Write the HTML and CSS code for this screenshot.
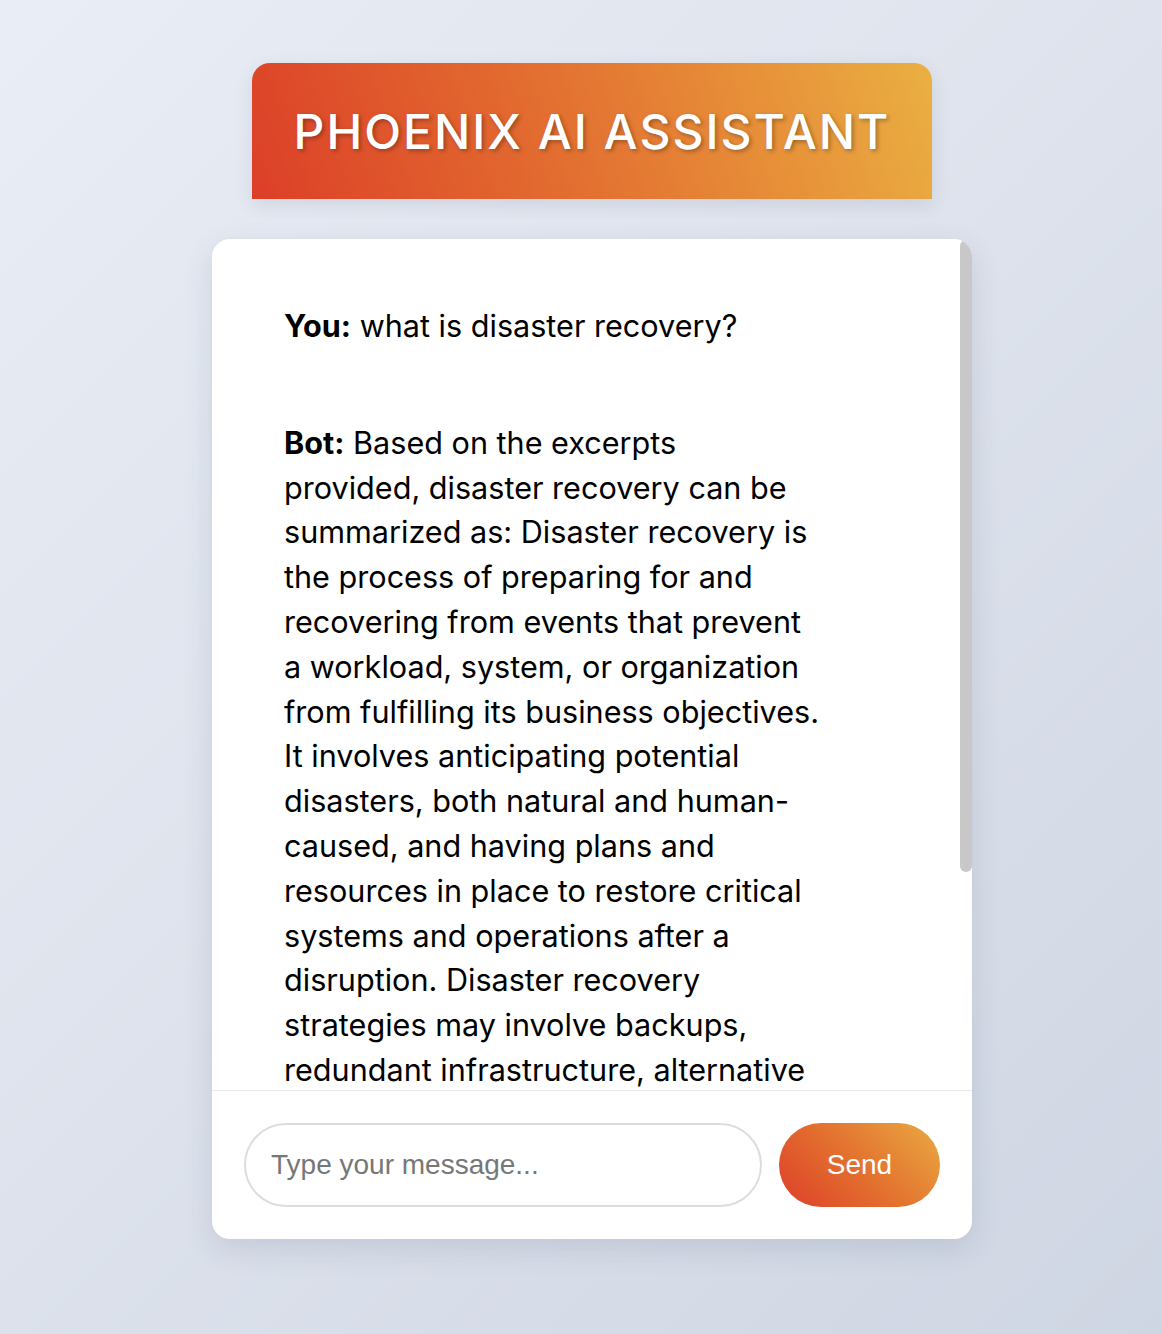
FILE: index.html
```html
<!DOCTYPE html>
<html lang="en">
<head>
<meta charset="utf-8">
<title>Phoenix AI Assistant</title>
<link rel="stylesheet" href="styles.css">
</head>
<body>
  <main class="page">
    <header class="banner">
      <h1 class="banner-title">PHOENIX AI ASSISTANT</h1>
    </header>
    <section class="chat">
      <div class="messages-wrap">
        <div class="messages">
          <div class="message user"><strong>You:</strong> what is disaster recovery?</div>
          <div class="message bot"><strong>Bot:</strong> Based on the excerpts provided, disaster recovery can be summarized as: Disaster recovery is the process of preparing for and recovering from events that prevent a workload, system, or organization from fulfilling its business objectives. It involves anticipating potential disasters, both natural and human-caused, and having plans and resources in place to restore critical systems and operations after a disruption. Disaster recovery strategies may involve backups, redundant infrastructure, alternative sites, and detailed procedures for recovering data and resuming operations quickly to minimize downtime and data loss.</div>
        </div>
        <div class="scroll-thumb"></div>
      </div>
      <form class="composer">
        <input class="composer-input" type="text" placeholder="Type your message...">
        <button class="composer-send" type="button">Send</button>
      </form>
    </section>
  </main>
</body>
</html>
```
FILE: styles.css
```css
html, body {
  margin: 0;
  padding: 0;
}

body {
  min-height: 100vh;
  background: linear-gradient(135deg, #e9edf5 0%, #dde2ec 50%, #cfd6e3 100%);
  font-family: Inter, "Noto Sans", sans-serif;
  color: #000;
}

.page {
  display: flex;
  flex-direction: column;
  align-items: center;
  padding: 63px 0 40px 22px;
}

.banner {
  width: 680px;
  height: 136px;
  box-sizing: border-box;
  display: flex;
  align-items: center;
  justify-content: center;
  border-radius: 18px 18px 0 0;
  background: linear-gradient(70deg, #dc3f28 0%, #e2692f 40%, #e79139 75%, #eab042 100%);
  box-shadow: 0 6px 18px rgba(60, 70, 100, 0.12);
}

.banner-title {
  margin: 0;
  font-family: Inter, "Liberation Sans", sans-serif;
  font-weight: 500;
  font-size: 48px;
  letter-spacing: 2px;
  color: #fff;
  text-shadow: 2px 2px 4px rgba(0, 0, 0, 0.3);
}

.chat {
  margin-top: 40px;
  width: 760px;
  height: 1000px;
  background: #fff;
  border-radius: 18px;
  box-shadow: 0 10px 30px rgba(60, 70, 100, 0.14);
  display: flex;
  flex-direction: column;
  overflow: hidden;
}

.messages-wrap {
  position: relative;
  flex: 1;
  min-height: 0;
  display: flex;
}

.messages {
  flex: 1;
  overflow: hidden;
  padding: 40px 52px 40px 40px;
}

.scroll-thumb {
  position: absolute;
  top: 1px;
  right: 0;
  width: 12px;
  height: 632px;
  border-radius: 6px;
  background: #c8c8c8;
}

.message {
  max-width: 536px;
  padding: 25px 33px 25px 32px;
  margin-bottom: 22px;
  font-size: 30.6px;
  line-height: 44.8px;
}

.message strong {
  font-weight: 700;
}

.composer {
  display: flex;
  gap: 17px;
  padding: 32px;
  border-top: 1px solid #e8e8e8;
  margin: 0;
}

.composer-input {
  flex: 1;
  height: 84px;
  box-sizing: border-box;
  border: 2px solid #dddddd;
  border-radius: 42px;
  padding: 0 25px;
  font-family: "Liberation Sans", Arial, sans-serif;
  font-size: 28px;
  color: #333;
  outline: none;
}

.composer-input::placeholder {
  color: #777;
}

.composer-send {
  width: 161px;
  height: 84px;
  border: none;
  border-radius: 42px;
  background: linear-gradient(45deg, #dd3f28 0%, #e3722f 50%, #eaaa42 100%);
  color: #fff;
  font-family: "Liberation Sans", Arial, sans-serif;
  font-size: 28px;
  cursor: pointer;
}
```
